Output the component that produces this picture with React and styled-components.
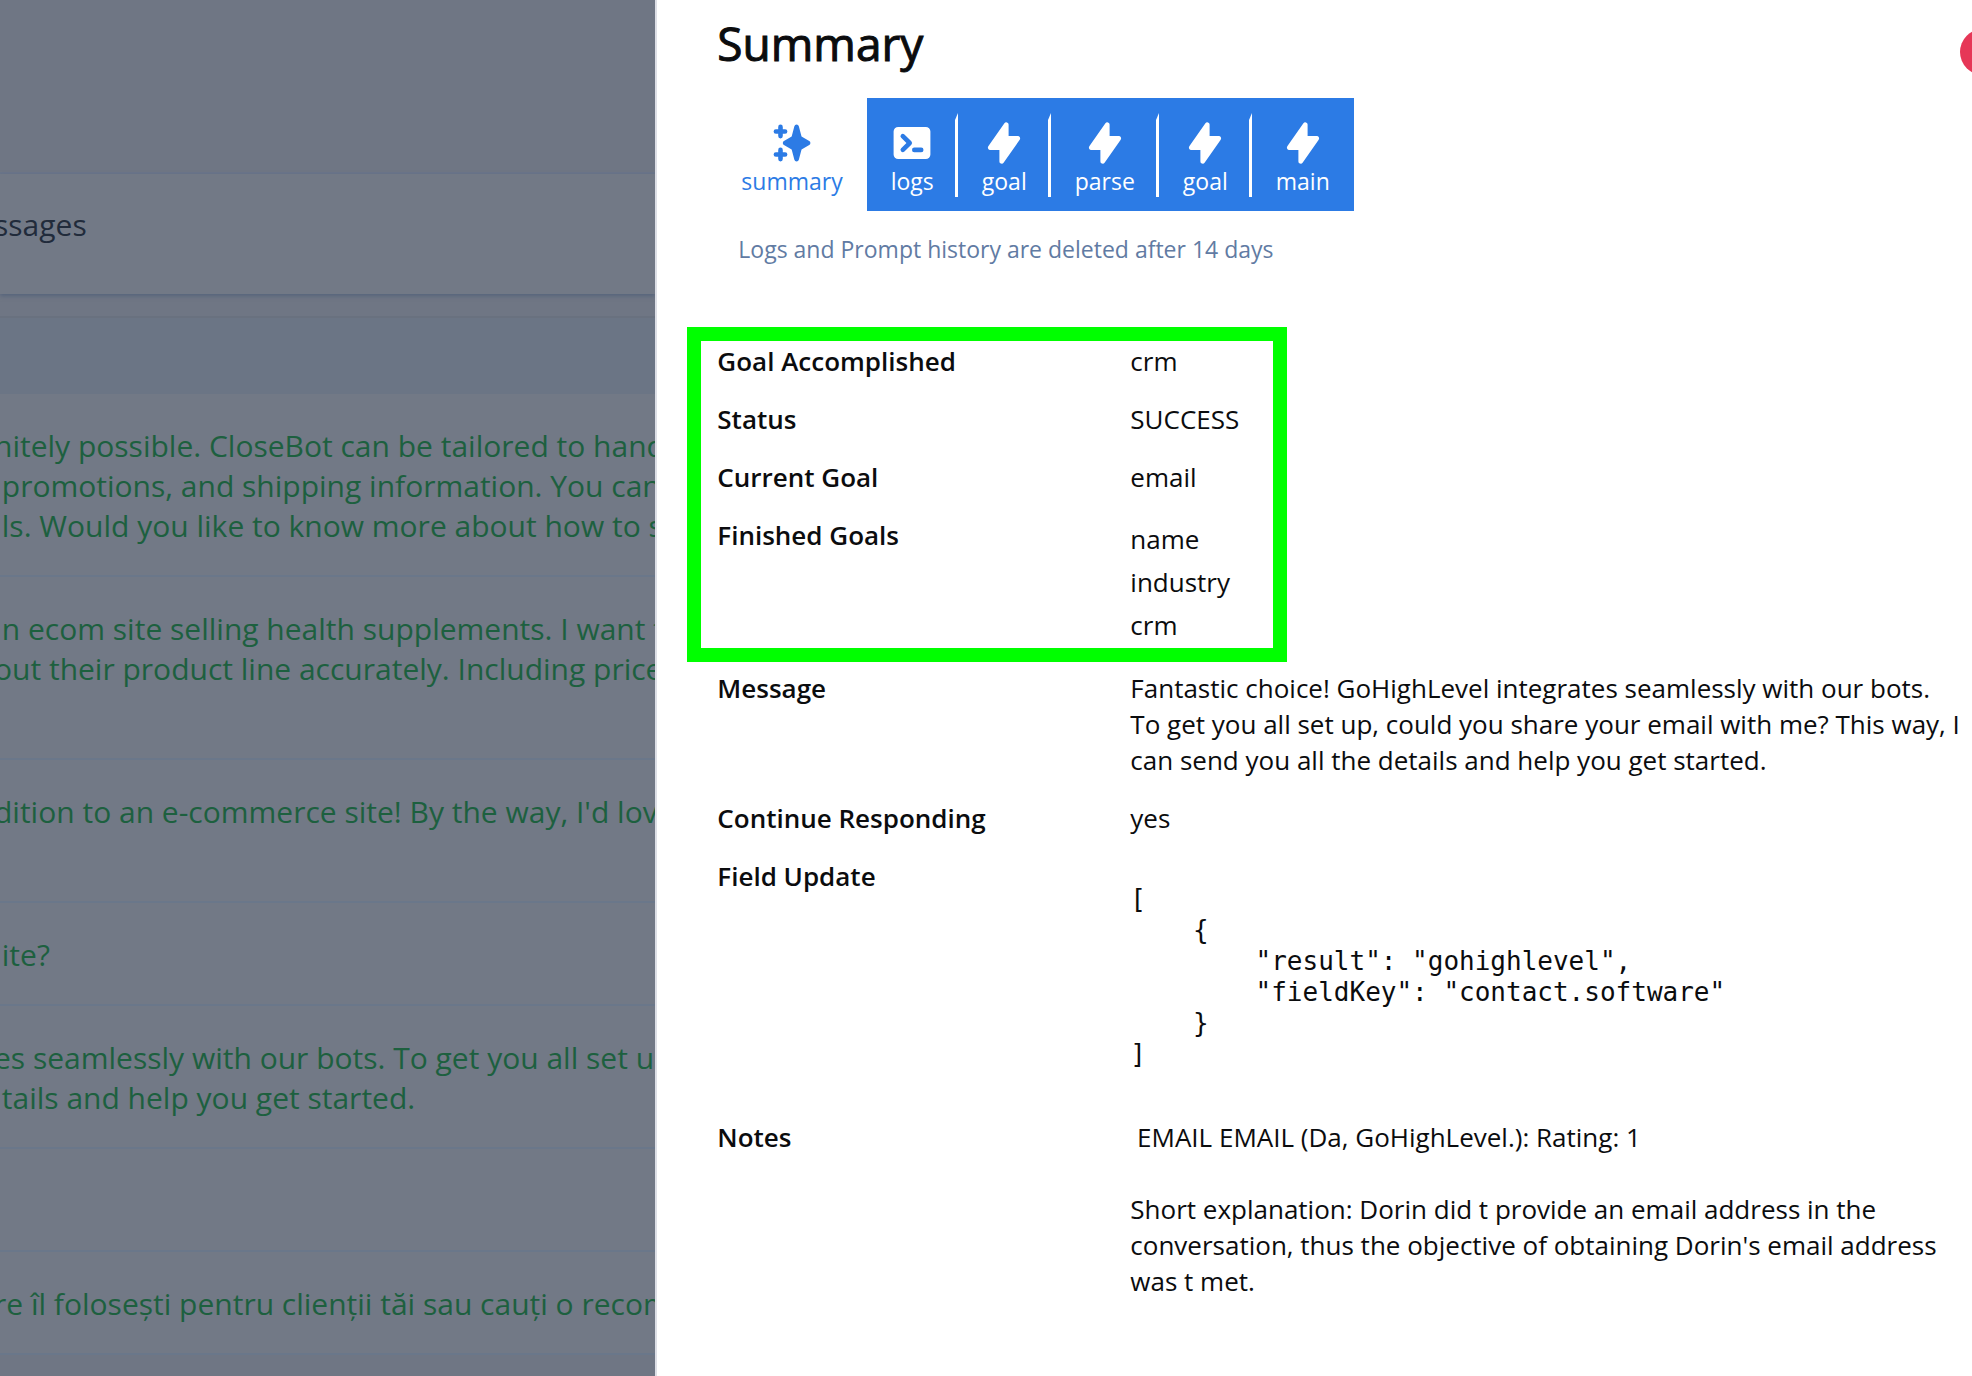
import React from 'react'
import styled, { createGlobalStyle } from 'styled-components'
import { HiSparkles, HiTerminal, HiLightningBolt } from 'react-icons/hi'

const messages = [
  `nitely possible. CloseBot can be tailored to handle
 promotions, and shipping information. You can
 ls. Would you like to know more about how to set`,
  ` n ecom site selling health supplements. I want to
out their product line accurately. Including prices
 `,
  `dition to an e-commerce site! By the way, I'd love
 `,
  ` ite?`,
  `es seamlessly with our bots. To get you all set up
 tails and help you get started.`,
  ` `,
  `re îl folosești pentru clienții tăi sau cauți o recomandare`,
]

const tabs = [
  { id: 1, label: 'logs', Icon: HiTerminal },
  { id: 2, label: 'goal', Icon: HiLightningBolt },
  { id: 3, label: 'parse', Icon: HiLightningBolt },
  { id: 4, label: 'goal', Icon: HiLightningBolt },
  { id: 5, label: 'main', Icon: HiLightningBolt },
]

const finishedGoals = ['name', 'industry', 'crm']

const fieldUpdate = [{ result: 'gohighlevel', fieldKey: 'contact.software' }]

const message = `Fantastic choice! GoHighLevel integrates seamlessly with our bots.
To get you all set up, could you share your email with me? This way, I
can send you all the details and help you get started.`

const notes = ` EMAIL EMAIL (Da, GoHighLevel.): Rating: 1

Short explanation: Dorin did t provide an email address in the
conversation, thus the objective of obtaining Dorin's email address
was t met.`

const MessageList = () => {
  return (
    <Backdrop>
      <TopSpace />
      <Toolbar>ssages</Toolbar>
      <Table>
        <thead>
          <tr><th aria-label='Message'></th></tr>
        </thead>
        <tbody>
          {
            messages.map((text, index) => (
              <tr key={index}><td>{text}</td></tr>
            ))
          }
        </tbody>
      </Table>
    </Backdrop>
  )
}

const TabBar = () => {
  return (
    <Tabs role='tablist'>
      <ActiveTab role='tab' aria-selected='true'>
        <TabFace>
          <HiSparkles />
          summary
        </TabFace>
      </ActiveTab>
      <TabGroup>
        {
          tabs.map(({ id, label, Icon }) => (
            <Tab role='tab' aria-selected='false' key={id}>
              <TabFace $divider={id !== tabs.length}>
                <Icon />
                {label}
              </TabFace>
            </Tab>
          ))
        }
      </TabGroup>
    </Tabs>
  )
}

const App = () => {
  return (
    <Page>
      <GlobalStyle />
      <MessageList />
      <Drawer>
        <Header>
          <h1>Summary</h1>
          <CloseButton aria-label='Close' />
        </Header>
        <TabBar />
        <Hint>Logs and Prompt history are deleted after 14 days</Hint>
        <Highlight>
          <Details>
            <dt>Goal Accomplished</dt>
            <dd>crm</dd>
            <dt>Status</dt>
            <dd>SUCCESS</dd>
            <dt>Current Goal</dt>
            <dd>email</dd>
            <dt>Finished Goals</dt>
            <dd>
              <GoalList>
                {finishedGoals.map((goal) => <li key={goal}>{goal}</li>)}
              </GoalList>
            </dd>
          </Details>
        </Highlight>
        <More>
          <Details>
            <dt>Message</dt>
            <dd>{message}</dd>
            <dt>Continue Responding</dt>
            <dd>yes</dd>
            <dt>Field Update</dt>
            <dd><Code>{JSON.stringify(fieldUpdate, null, 4)}</Code></dd>
            <dt>Notes</dt>
            <dd>{notes}</dd>
          </Details>
        </More>
      </Drawer>
    </Page>
  )
}

const GlobalStyle = createGlobalStyle`
  *{
    box-sizing : border-box;
  }
  body{
    margin : 0;
    font-family : 'Open Sans', sans-serif;
    color : #0b0c0e;
    background : #fff;
  }
`

const Page = styled.div`
  display : grid;
  grid-template-columns : minmax(0, 1fr) minmax(0, 2fr);
  height : 100vh;
  overflow : hidden;
`

const Backdrop = styled.section`
  overflow : hidden;
  background : #6f7684;
  border-right : 2px solid #dddfe6;
  font-size : 30px;
  line-height : 40px;
`

const TopSpace = styled.div`
  height : 174px;
  border-bottom : 2px solid #6a7589;
`

const Toolbar = styled.div`
  height : 120px;
  padding-top : 31px;
  margin-bottom : 22px;
  background : #727986;
  color : #212b3b;
  box-shadow : 0 2px 4px #56647b;
  text-indent : -6px;
`

const Table = styled.table`
  width : calc(100% + 6px);
  margin-left : -6px;
  border-collapse : separate;
  border-spacing : 0;
  th{
    height : 78px;
    padding : 0;
    background : #6b7585;
    border-top : 2px solid #69717f;
  }
  td{
    padding : 32px 0 29px;
    background : #727986;
    border-bottom : 2px solid #6a778a;
    color : #1d603f;
    white-space : pre;
  }
`

const Drawer = styled.main`
  padding : 12px 30px;
  background : #fff;
`

const Header = styled.header`
  display : flex;
  justify-content : space-between;
  align-items : flex-start;
  padding-left : 30px;
  margin-bottom : 23px;
  h1{
    margin : 0;
    font-size : 46px;
    line-height : 62px;
    font-weight : 400;
    -webkit-text-stroke : 1px currentColor;
  }
`

/* hangs over the right edge of the window */
const CloseButton = styled.button`
  flex : none;
  width : 46px;
  height : 46px;
  margin : 17px -64px 0 0;
  padding : 0;
  border : none;
  border-radius : 50%;
  background : #e63757;
`

const Tabs = styled.div`
  display : flex;
  padding-left : 30px;
`

const TabGroup = styled.div`
  display : flex;
  background : #2c7be5;
`

const Tab = styled.button`
  padding : 15px 0 14px;
  border : none;
  background : none;
  color : #fff;
  font-family : inherit;
  font-size : 23px;
  line-height : 30px;
`

const ActiveTab = styled(Tab)`
  color : #2c7be5;
`

/* the clear top border cuts the divider to a point */
const TabFace = styled.span`
  display : flex;
  flex-direction : column;
  align-items : center;
  padding : 0 ${({$divider})=>$divider ? 21 : 24}px 1px 24px;
  border-top : 7px solid transparent;
  border-right : ${({$divider})=>$divider ? '3px solid #fff' : 'none'};
  svg{
    width : 46px;
    height : 46px;
    margin : 0 -4px;
  }
`

const Hint = styled.p`
  margin : 22px 0 62px;
  padding-left : 51px;
  color : #617ba3;
  font-size : 23px;
  line-height : 32px;
`

const Highlight = styled.div`
  width : 600px;
  padding : 2px 16px 1px;
  border : 14px solid #00ff00;
`

const More = styled.div`
  padding : 8px 0 0 30px;
`

const Details = styled.dl`
  display : grid;
  grid-template-columns : 413px auto;
  justify-content : start;
  row-gap : 22px;
  margin : 0;
  font-size : 26px;
  line-height : 36px;
  dt{
    font-weight : 600;
  }
  dd{
    margin : 0;
    white-space : pre;
  }
`

const GoalList = styled.ul`
  margin : 0;
  padding : 1px 0 0;
  list-style : none;
  line-height : 43px;
`

const Code = styled.pre`
  margin : 26px 0 27px;
  font-family : 'DejaVu Sans Mono', monospace;
  font-size : 26px;
  line-height : 31px;
`

export default App
